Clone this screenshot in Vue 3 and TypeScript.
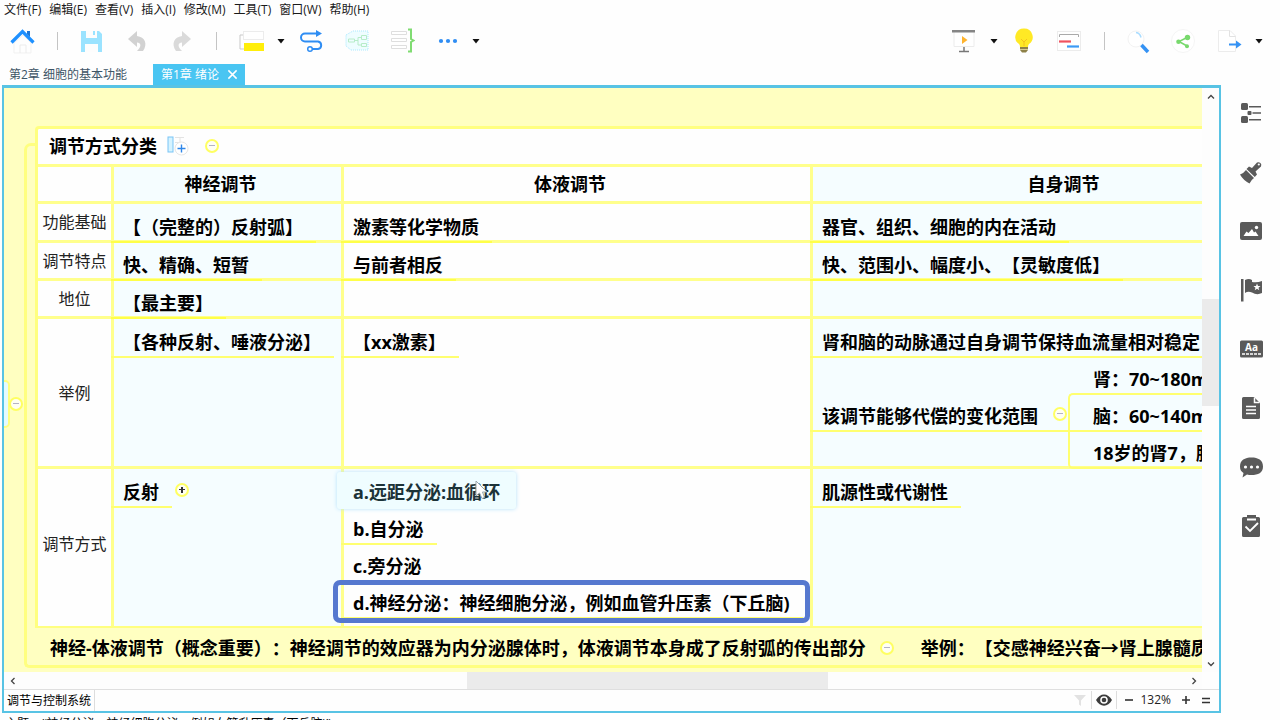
<script setup lang="ts">
interface Cell {
  nodes: string[]
}
interface Row {
  label: string
  height: string
  cells: Cell[]
}

const menus: string[] = ['文件(F)', '编辑(E)', '查看(V)', '插入(I)', '修改(M)', '工具(T)', '窗口(W)', '帮助(H)']

const headers: string[] = ['神经调节', '体液调节', '自身调节']

const rows: Row[] = [
  {
    label: '功能基础',
    height: 'row-39',
    cells: [{ nodes: ['【（完整的）反射弧】'] }, { nodes: ['激素等化学物质'] }, { nodes: ['器官、组织、细胞的内在活动'] }],
  },
  {
    label: '调节特点',
    height: 'row-38',
    cells: [{ nodes: ['快、精确、短暂'] }, { nodes: ['与前者相反'] }, { nodes: ['快、范围小、幅度小、【灵敏度低】'] }],
  },
  {
    label: '地位',
    height: 'row-38',
    cells: [{ nodes: ['【最主要】'] }, { nodes: [] }, { nodes: [] }],
  },
]

const ranges: string[] = ['肾：70~180mmHg', '脑：60~140mmHg', '18岁的肾7，脑6']
</script>

<template>
  <div class="app">
    <nav class="menubar" aria-label="菜单">
      <button v-for="m in menus" :key="m" type="button">{{ m }}</button>
    </nav>

    <div class="toolbar">
      <div class="tools">
        <button type="button" class="tool" aria-label="主页">
          <svg viewBox="0 0 28 28"><path d="M5 16V26H22V16L14 8Z" fill="#fefefe" stroke="#f1f1f1" /><path d="M11 26v-8h6v8" fill="none" stroke="#ececec" /><path d="M2.500 15.500 13.500 4.500 24.500 15.500" fill="none" stroke="#1e90ff" stroke-width="3.200" /><path d="M18 4h3v6l-3-3z" fill="#1e78d8" /></svg>
        </button>
        <span class="sep"></span>
        <button type="button" class="tool" aria-label="保存">
          <svg viewBox="0 0 28 28"><path d="M3 4H21L24 7V25H3Z" fill="#9be3ff" /><path d="M8 4h11v7H8zM7 17h13v8H7z" fill="#fdfdfd" /><path d="M15 4h2v4h-2z" fill="#9be3ff" /></svg>
        </button>
        <button type="button" class="tool" aria-label="撤销">
          <svg viewBox="0 0 28 28"><path d="M5 12 14 4V9C22 10 25 17 20 24H14C19 19 18 16 14 15.500V20Z" fill="#d2d2d2" /></svg>
        </button>
        <button type="button" class="tool" aria-label="重做">
          <svg viewBox="0 0 28 28"><path d="M23 12 14 4V9C6 10 3 17 8 24H14C9 19 10 16 14 15.500V20Z" fill="#dadada" /></svg>
        </button>
        <span class="sep"></span>
        <button type="button" class="tool" aria-label="主题">
          <svg viewBox="0 0 28 28"><path d="M7 8H3V22H7" fill="none" stroke="#c9c9c9" /><rect x="6.500" y="4.500" width="20" height="8" fill="#fff" stroke="#ececec" /><rect x="7" y="16" width="20" height="8" fill="#ffee0a" /></svg>
        </button>
        <button type="button" class="caret" aria-label="更多主题"><svg viewBox="0 0 10 8"><path d="M1.500 2h7L5 6.500z" fill="#111" /></svg></button>
        <button type="button" class="tool" aria-label="联系">
          <svg viewBox="0 0 28 28"><path d="M20 6.500H8a4 4 0 0 0 0 8H21a3.800 3.800 0 0 1 0 7.500H15" fill="none" stroke="#2f8df3" stroke-width="2" /><path d="M19 3 25 6.500 19 10z" fill="#2f8df3" /><circle cx="13" cy="22" r="2.300" fill="#fff" stroke="#2f8df3" stroke-width="1.500" /></svg>
        </button>
        <button type="button" class="tool" aria-label="外框">
          <svg viewBox="0 0 28 28"><path d="M4 8 11 4H26V23H9L4 19Z" fill="#effdff" stroke="#a9e8ff" stroke-dasharray="1 1" /><path d="M6.500 12h6v3h-6zM19.500 8.500h5v4h-5zM19.500 16.500h5v3h-5zM13 13.500h3V10.500h3M16 13.500v4.500h3" fill="none" stroke="#b7ecc8" /></svg>
        </button>
        <button type="button" class="tool" aria-label="概要">
          <svg viewBox="0 0 28 28"><path d="M4.500 4.500h15v3h-15zM4.500 11.500h15v3h-15zM4.500 18.500h15v3h-15z" fill="#fff" stroke="#dedede" /><path d="M21 2.500h3V12l2.500 1.500L24 15v9.500h-3" fill="none" stroke="#80dc72" stroke-width="2" /></svg>
        </button>
        <button type="button" class="tool" aria-label="更多">
          <svg viewBox="0 0 28 28"><g fill="#2f8df3"><circle cx="9" cy="14" r="2.100" /><circle cx="16" cy="14" r="2.100" /><circle cx="23" cy="14" r="2.100" /></g></svg>
        </button>
        <button type="button" class="caret" aria-label="更多选项"><svg viewBox="0 0 10 8"><path d="M1.500 2h7L5 6.500z" fill="#111" /></svg></button>
      </div>
      <div class="tools">
        <button type="button" class="tool" aria-label="演示">
          <svg viewBox="0 0 28 28"><path d="M3 5V19.500H23V5" fill="#fff" stroke="#ececec" /><path d="M1 3h23v2.500H1z" fill="#858585" /><path d="M11 9 16.500 13 11 17z" fill="#ffb42e" /><path d="M13 20v4M8 24.500h10" stroke="#777" stroke-width="1.500" /></svg>
        </button>
        <button type="button" class="caret" aria-label="演示选项"><svg viewBox="0 0 10 8"><path d="M.500 2h7L4 6.500z" fill="#111" /></svg></button>
        <button type="button" class="tool" aria-label="头脑风暴">
          <svg viewBox="0 0 28 28"><path d="M13 1.500A8.500 8.500 0 0 1 18 17q-1 1-1 3H9q0-2-1-3A8.500 8.500 0 0 1 13 1.500Z" fill="#ffe925" /><path d="M13 19v-5M10 12l3 3 3-3" fill="none" stroke="#f3c21e" /><path d="M9 20h8v3l-2 2.500h-4L9 23z" fill="#8e8148" /><path d="M9 22.500h8" stroke="#d8cc95" /></svg>
        </button>
        <button type="button" class="tool" aria-label="甘特图">
          <svg viewBox="0 0 28 28"><rect x="1.500" y="4.500" width="23" height="19" fill="#fff" stroke="#ececec" /><path d="M3.500 10V7.500h19V10" fill="none" stroke="#aaa" /><path d="M3 14.500h12" stroke="#f0525f" stroke-width="2.200" /><path d="M11 19.500h12" stroke="#3d9af5" stroke-width="2.200" /></svg>
        </button>
        <span class="sep"></span>
        <button type="button" class="tool" aria-label="搜索">
          <svg viewBox="0 0 28 28"><circle cx="11" cy="12" r="8" fill="#fff" stroke="#f3f3f3" /><path d="M11 5.500q4 .5 5 5" fill="none" stroke="#a9dcff" stroke-width="1.500" /><path d="M16.500 18 23 25" stroke="#3492f4" stroke-width="3.500" /></svg>
        </button>
        <button type="button" class="tool" aria-label="分享">
          <svg viewBox="0 0 28 28"><circle cx="13" cy="14" r="11.500" fill="#fff" stroke="#f5f5f5" /><path d="M18 10 9 14.500 17 19" fill="none" stroke="#78d96d" stroke-width="1.500" /><g fill="#78d96d"><circle cx="17.500" cy="10.500" r="2.700" /><circle cx="8.500" cy="14.800" r="2.300" /><circle cx="17" cy="19.300" r="2" /></g></svg>
        </button>
        <button type="button" class="tool" aria-label="导出">
          <svg viewBox="0 0 28 28"><path d="M3.500 3.500H15L20.500 9V24.500H3.500Z" fill="#fff" stroke="#ececec" /><path d="M14.500 3.500V9.500h6" fill="none" stroke="#e2e2e2" /><path d="M14 16.500h7v-3l5.500 4L21 21.500v-3h-7z" fill="#3592f4" /></svg>
        </button>
        <button type="button" class="caret" aria-label="导出选项"><svg viewBox="0 0 10 8"><path d="M1.500 2h7L5 6.500z" fill="#111" /></svg></button>
      </div>
    </div>

    <div class="tabs">
      <button type="button" class="tab">第2章 细胞的基本功能</button>
      <div class="tab active">
        <button type="button">第1章 绪论</button>
        <button type="button" class="close" aria-label="关闭">
          <svg viewBox="0 0 12 12"><path d="M1.500 1.500l9 9M10.500 1.500l-9 9" stroke="#fff" stroke-width="1.600" /></svg>
        </button>
      </div>
    </div>

    <div class="body">
      <main class="editor">
        <div class="canvas">
          <div class="parent"></div>
          <button type="button" class="fold parent-fold" aria-label="折叠"></button>
          <div class="branch">
            <section class="frame">
              <header class="title">
                <h1>调节方式分类</h1>
                <button type="button" class="add" aria-label="添加列">
                  <svg viewBox="0 0 22 20"><rect x="1" y="1" width="5" height="15" fill="#d5f3ff" stroke="#79c4f5" /><path d="M8 1.500h9M13 1v5M8 6.500h9" fill="none" stroke="#e3e3e3" /><circle cx="14.500" cy="12.500" r="6.500" fill="#fff" stroke="#e6e6e6" /><path d="M14.500 8.500v8M10.500 12.500h8" stroke="#2f86e8" stroke-width="1.400" /></svg>
                </button>
                <button type="button" class="fold" aria-label="折叠"></button>
              </header>
              <table>
                <colgroup>
                  <col class="c0" /><col class="c1" /><col class="c2" /><col class="c3" />
                </colgroup>
                <thead>
                  <tr class="row-37">
                    <td></td>
                    <th v-for="h in headers" :key="h" scope="col">{{ h }}</th>
                  </tr>
                </thead>
                <tbody>
                  <tr v-for="r in rows" :key="r.label" :class="r.height">
                    <th scope="row">{{ r.label }}</th>
                    <td v-for="(c, i) in r.cells" :key="i" class="low">
                      <div v-for="n in c.nodes" :key="n" class="node strong">{{ n }}</div>
                    </td>
                  </tr>
                  <tr class="row-150">
                    <th scope="row">举例</th>
                    <td><div class="node">【各种反射、唾液分泌】</div></td>
                    <td><div class="node">【xx激素】</div></td>
                    <td>
                      <div class="node wide">肾和脑的动脉通过自身调节保持血流量相对稳定</div>
                      <div class="group">
                        <div class="node owner">该调节能够代偿的变化范围<button type="button" class="fold" aria-label="折叠"></button></div>
                        <ul>
                          <li v-for="x in ranges" :key="x">{{ x }}</li>
                        </ul>
                      </div>
                    </td>
                  </tr>
                  <tr class="row-160">
                    <th scope="row">调节方式</th>
                    <td>
                      <div class="line">
                        <div class="node">反射</div>
                        <button type="button" class="fold plus" aria-label="展开"></button>
                      </div>
                    </td>
                    <td>
                      <div class="node hover">
                        a.远距分泌:血循环
                        <svg class="cursor" viewBox="0 0 14 20"><path d="M1 1V16L4.500 13 7 18.500 9.500 17.500 7.500 12H12Z" fill="#fff" stroke="#98a6aa" /></svg>
                      </div>
                      <div class="node">b.自分泌</div>
                      <div class="node">c.旁分泌</div>
                      <div class="node selected">d.神经分泌：神经细胞分泌，例如血管升压素（下丘脑)</div>
                    </td>
                    <td><div class="node">肌源性或代谢性</div></td>
                  </tr>
                </tbody>
              </table>
            </section>
            <div class="summary">
              <span>神经-体液调节（概念重要）：神经调节的效应器为内分泌腺体时，体液调节本身成了反射弧的传出部分</span>
              <button type="button" class="fold" aria-label="折叠"></button>
              <span>举例：【交感神经兴奋→肾上腺髓质分泌】</span>
            </div>
          </div>
        </div>
        <div class="vscroll">
          <button type="button" aria-label="向上"><svg viewBox="0 0 8 8"><path d="M1 5.500 4 2.500 7 5.500" /></svg></button>
          <div class="vtrack"><i></i></div>
          <button type="button" aria-label="向下"><svg viewBox="0 0 8 8"><path d="M1 2.500 4 5.500 7 2.500" /></svg></button>
        </div>
        <div class="hscroll">
          <button type="button" aria-label="向左"><svg viewBox="0 0 8 8"><path d="M5.500 1 2.500 4 5.500 7" /></svg></button>
          <div class="htrack"><i></i></div>
          <button type="button" aria-label="向右"><svg viewBox="0 0 8 8"><path d="M2.500 1 5.500 4 2.500 7" /></svg></button>
        </div>
        <footer class="sheets">
          <button type="button" class="sheet">调节与控制系统</button>
          <div class="zoom">
            <button type="button" class="filter" aria-label="筛选"><svg viewBox="0 0 12 12"><path d="M0 1h12L7 6.500V12L5 10.500v-4z" fill="#e2e2e2" /></svg></button>
            <button type="button" class="eye" aria-label="显示"><svg viewBox="0 0 16 12"><path d="M0 6C4-1.500 12-1.500 16 6 12 13.500 4 13.500 0 6Z" fill="#3c3c3c" /><circle cx="8" cy="6" r="3.800" fill="#fff" /><circle cx="8" cy="6" r="2.300" fill="#3c3c3c" /></svg></button>
            <button type="button" class="step" aria-label="缩小"><svg viewBox="0 0 10 10"><path d="M1 5h8" stroke="#333" stroke-width="1.600" /></svg></button>
            <span class="percent">132%</span>
            <button type="button" class="step" aria-label="放大"><svg viewBox="0 0 10 10"><path d="M1 5h8M5 1v8" stroke="#333" stroke-width="1.600" /></svg></button>
            <button type="button" class="step" aria-label="适应"><svg viewBox="0 0 10 10"><path d="M1 3.500h8M1 7.500h8" stroke="#333" stroke-width="1.600" /></svg></button>
          </div>
        </footer>
      </main>

      <aside class="side">
        <button type="button" aria-label="大纲">
          <svg viewBox="0 0 24 24"><g fill="#5a5a5a"><rect x="2" y="2" width="7" height="7" rx="1.500" /><rect x="2" y="15" width="7" height="7" rx="1.500" /><rect x="8.500" y="10" width="4" height="4" rx="1" /><path d="M10 5h12v1.500H10zM13.500 11.300H22v1.500h-8.500zM10 18h12v1.500H10z" /></g></svg>
        </button>
        <button type="button" aria-label="格式">
          <svg viewBox="0 0 24 24"><g fill="#5a5a5a"><path d="M1 14.500Q4 14 7 10L15 18Q12 20 10.500 23.500Q4 20 1 14.500Z" /><path d="M7.500 9 10 6.500 13 8 18 2.500A3 3 0 0 1 22 6.500L16.500 11.500 18 14.500 15.800 17Z" /></g><circle cx="19.800" cy="4.500" r="1.100" fill="#fff" /></svg>
        </button>
        <button type="button" aria-label="图片">
          <svg viewBox="0 0 24 24"><rect x="1" y="3" width="22" height="18" rx="2" fill="#5a5a5a" /><path d="M4.500 17 7.500 12.500 9.500 14 13 10 15 13.500 16.500 12.500 19.500 17Z" fill="#fff" /><circle cx="17.500" cy="8.500" r="1.700" fill="#fff" /></svg>
        </button>
        <button type="button" aria-label="标记">
          <svg viewBox="0 0 24 24"><path d="M2 1h2.500v22.500H2zM6 2Q10 0 13 2V4Q18 5 23 3V15Q18 17.500 13 14.500 9 13 6 15Z" fill="#5a5a5a" /><path d="M18 5.500 19 8h2.500l-2 1.700.8 2.600L18 10.800l-2.300 1.500.8-2.600-2-1.700H17Z" fill="#fff" /></svg>
        </button>
        <button type="button" aria-label="标签">
          <svg viewBox="0 0 24 24"><rect x="1" y="3.500" width="23" height="17" rx="1.500" fill="#5a5a5a" /><path d="M3 17h19" stroke="#fff" stroke-width="1.500" stroke-dasharray="3 1" /><text x="12.500" y="13.500" text-anchor="middle" class="aa">Aa</text></svg>
        </button>
        <button type="button" aria-label="笔记">
          <svg viewBox="0 0 24 24"><path d="M3 2.500A1.500 1.500 0 0 1 4.500 1H15L21 7V21.500A1.500 1.500 0 0 1 19.500 23H4.500A1.500 1.500 0 0 1 3 21.500Z" fill="#5a5a5a" /><path d="M15.500 1.500V6.500H20.500M7 10.500h10M7 14h10M7 17.500h10" fill="none" stroke="#fff" stroke-width="1.500" /></svg>
        </button>
        <button type="button" aria-label="评论">
          <svg viewBox="0 0 24 24"><path d="M12.500 2.500C19 2.500 24 5 24 11.500S19 20 12.500 20Q10 20 8 19.500L3.500 22.500 4.500 18Q1 16 1 11.500C1 5 6 2.500 12.500 2.500Z" fill="#5a5a5a" /><g fill="#fff"><circle cx="6.500" cy="12" r="1.600" /><circle cx="12.500" cy="12" r="1.600" /><circle cx="18.500" cy="12" r="1.600" /></g></svg>
        </button>
        <button type="button" aria-label="任务">
          <svg viewBox="0 0 24 24"><path d="M4.500 3H8V1h9V3h2.500A1.500 1.500 0 0 1 21 4.500V21.500A1.500 1.500 0 0 1 19.500 23H4.500A1.500 1.500 0 0 1 3 21.500V4.500A1.500 1.500 0 0 1 4.500 3Z" fill="#5a5a5a" /><path d="M8 5.500h9M6.500 12.500 11 17l8-8" fill="none" stroke="#fff" stroke-width="1.800" /></svg>
        </button>
      </aside>
    </div>

    <div class="status">主题：(‘神经分泌：神经细胞分泌，例如血管升压素（下丘脑)’)</div>
  </div>
</template>

<style>
body {
  margin: 0;
  background: #fefefe;
}
</style>

<style scoped>
.app {
  display: flex;
  flex-direction: column;
  height: 100vh;
  overflow: hidden;
  background: #fefefe;
  color: #000;
  font: 12px/16px 'Open Sans', 'Noto Sans CJK SC', sans-serif;
  text-spacing-trim: space-all;
}
button {
  display: block;
  flex: none;
  margin: 0;
  padding: 0;
  border: 0;
  background: none;
  color: inherit;
  font: inherit;
  white-space: nowrap;
}
svg {
  display: block;
}
.menubar {
  display: flex;
  flex: none;
  gap: 8px;
  height: 20px;
  padding-left: 4px;
  color: #1a1a1a;
}
.toolbar {
  display: flex;
  flex: none;
  justify-content: space-between;
  height: 42px;
  padding: 0 16px 2px 9px;
}
.tools {
  display: flex;
  gap: 17px;
  align-items: center;
}
.tool,
.tool svg {
  width: 28px;
  height: 28px;
}
.caret {
  margin: 0 -6px;
}
.caret:last-child {
  margin-right: 0;
}
.caret svg {
  width: 10px;
  height: 8px;
}
.sep {
  width: 1px;
  height: 18px;
  margin: 0 3px;
  background: #c4c4c4;
}
.tabs {
  display: flex;
  flex: none;
  gap: 26px;
  height: 21px;
  padding-left: 9px;
  color: #3d5566;
}
.tab {
  height: 21px;
}
.active {
  display: flex;
  gap: 8px;
  align-items: center;
  padding: 0 7px 0 8px;
  background: #49c5f2;
  color: #fff;
}
.close svg {
  width: 11px;
  height: 11px;
}
.body {
  display: flex;
  flex: 1;
  min-height: 0;
  padding-left: 2px;
}
.editor {
  display: grid;
  flex: 1;
  grid-template-columns: minmax(0, 1fr) 17px;
  grid-template-rows: minmax(0, 1fr) 17px 22px;
  min-width: 0;
  border: 2px solid #58c3e4;
  border-top-width: 3px;
}
.canvas {
  position: relative;
  overflow: hidden;
  padding: 38px 0 0 20px;
  background: #ffffc1;
  font-size: 18px;
  font-weight: 700;
  white-space: nowrap;
}
.parent {
  position: absolute;
  top: 292px;
  left: -8px;
  width: 10px;
  height: 44px;
  border: 2px solid #ffff80;
  border-radius: 5px;
  background: #e4fbff;
}
.fold {
  position: relative;
  width: 14px;
  height: 14px;
  border: 2px solid #ffff62;
  border-radius: 50%;
  background: #fffff4;
}
.fold::before {
  content: '';
  position: absolute;
  top: 4px;
  left: 2px;
  width: 6px;
  height: 1px;
  background: #b4b4c4;
}
.plus::before {
  background: #333;
}
.plus::after {
  content: '';
  position: absolute;
  top: 2px;
  left: 4px;
  width: 2px;
  height: 6px;
  background: #333;
}
.parent-fold {
  position: absolute;
  top: 309px;
  left: 5px;
}
.branch {
  position: relative;
  width: 1500px;
  padding: 0 0 3px 11px;
}
.branch::before {
  content: '';
  position: absolute;
  inset: 17px 0 0 0;
  border: 3px solid #ffff80;
  border-right: 0;
  border-radius: 7px 0 0 5px;
}
.frame {
  position: relative;
  border: 3px solid #ffff80;
  border-right: 0;
  border-bottom-width: 2px;
  border-radius: 4px 0 0 0;
  background: #fefefe;
}
.title {
  display: flex;
  align-items: center;
  box-sizing: border-box;
  height: 35px;
  padding: 0 0 2px 11px;
}
h1 {
  margin: 0;
  font-size: 18px;
  line-height: 26px;
}
.add {
  margin: 0 16px 0 10px;
}
.add svg {
  width: 22px;
  height: 20px;
}
table {
  width: 1290px;
  table-layout: fixed;
  border-spacing: 0;
}
.c0 {
  width: 73px;
}
.c1 {
  width: 230px;
}
.c2 {
  width: 469px;
}
.c3 {
  width: 518px;
}
.row-37 {
  height: 37px;
}
.row-38 {
  height: 38px;
}
.row-39 {
  height: 39px;
}
.row-150 {
  height: 150px;
}
.row-160 {
  height: 160px;
}
th,
td {
  padding: 0;
  border: solid #ffff8c;
  border-width: 3px 0 0 3px;
  line-height: 26px;
}
thead th {
  padding-right: 14px;
}
tr > :first-child {
  border-left: 0;
}
tr > :nth-child(2),
tr > :nth-child(4) {
  background: #f5fdff;
}
tbody th {
  color: #222;
  font-size: 16px;
  font-weight: 400;
}
tbody td {
  padding-top: 2px;
  vertical-align: top;
}
tbody .low {
  padding: 0;
  vertical-align: bottom;
}
.row-160 th {
  padding-bottom: 7px;
}
.node {
  position: relative;
  z-index: 1;
  box-sizing: border-box;
  width: fit-content;
  height: 37px;
  margin-left: -3px;
  padding: 7px 13px 0 12px;
  border-bottom: 2px solid #ffff70;
  line-height: 28px;
}
.strong {
  margin-bottom: -3px;
  border-color: #ffff48;
}
.wide {
  width: auto;
}
.group {
  display: flex;
  align-items: center;
  margin-bottom: -3px;
}
.owner {
  display: flex;
  gap: 15px;
  padding-right: 1px;
}
.owner .fold {
  margin-top: 5px;
}
ul {
  position: relative;
  z-index: 1;
  flex: 1;
  margin: 0;
  padding: 0;
  list-style: none;
}
ul::before {
  content: '';
  position: absolute;
  inset: 35px 0 0 0;
  border: 2px solid #ffff70;
  border-right: 0;
  border-radius: 5px 0 0 5px;
}
li {
  box-sizing: border-box;
  height: 37px;
  padding: 7px 0 0 25px;
  line-height: 28px;
}
li:nth-child(2) {
  border-bottom: 2px solid #ffff70;
}
.line {
  display: flex;
  gap: 3px;
  align-items: center;
}
.hover {
  color: #1c3338;
}
.hover::before {
  content: '';
  position: absolute;
  z-index: -1;
  inset: 1px -3px -3px -4px;
  border-radius: 3px;
  background: #effdff;
  box-shadow: 0 0 4px #b5e2fb;
}
.cursor {
  position: absolute;
  top: 9px;
  right: 24px;
  width: 14px;
  height: 20px;
}
.selected::after {
  content: '';
  position: absolute;
  inset: -2px -7px -6px -8px;
  border: 5px solid #5678cf;
  border-radius: 7px;
}
.summary {
  position: relative;
  display: flex;
  align-items: center;
  height: 34px;
  padding: 3px 0 0 15px;
  line-height: 26px;
}
.summary .fold {
  margin: 0 27px 0 14px;
}
.vscroll {
  display: flex;
  flex-direction: column;
  background: #fdfdfd;
}
.vscroll button,
.hscroll button {
  display: grid;
  place-items: center;
  width: 17px;
  height: 17px;
}
.vscroll svg,
.hscroll svg {
  width: 8px;
  height: 8px;
  fill: none;
  stroke: #444;
  stroke-width: 1.300;
}
.vtrack {
  display: grid;
  flex: 1;
  grid-template-rows: 194fr 107fr 249fr;
}
.vtrack i {
  grid-row: 2;
  background: #ebebeb;
}
.hscroll {
  display: flex;
  background: #fdfdfd;
}
.htrack {
  display: grid;
  flex: 1;
  grid-template-columns: 446fr 361fr 357fr;
}
.htrack i {
  grid-column: 2;
  background: #ebebeb;
}
.sheets {
  display: flex;
  grid-column: 1 / -1;
  justify-content: space-between;
  border-top: 1px solid #dfdfdf;
}
.sheet {
  padding: 0 3px;
  border-right: 1px solid #ddd;
}
.zoom {
  display: flex;
  align-items: center;
  padding: 0 8px 1px 0;
}
.filter {
  margin-right: 5px;
}
.filter svg {
  width: 12px;
  height: 12px;
}
.eye {
  margin-right: 7px;
  padding: 3px 4px;
  border: solid #ddd;
  border-width: 0 1px;
}
.eye svg {
  width: 16px;
  height: 12px;
}
.step svg {
  width: 10px;
  height: 10px;
}
.percent {
  margin: 0 10px 0 6px;
  color: #222;
}
.step + .step {
  margin-left: 10px;
}
.side {
  display: flex;
  flex: none;
  flex-direction: column;
  gap: 35px;
  align-items: center;
  width: 59px;
  padding-top: 16px;
}
.side svg {
  width: 24px;
  height: 24px;
}
.aa {
  fill: #fff;
  font: 700 10px 'Open Sans', sans-serif;
}
.status {
  flex: none;
  height: 3px;
  overflow: hidden;
  padding: 4px 0 0 5px;
  line-height: 14px;
  white-space: nowrap;
}
</style>
